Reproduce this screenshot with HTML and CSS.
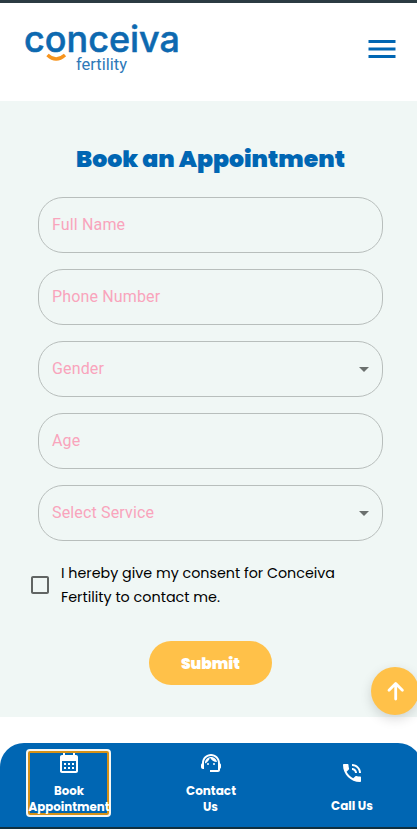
FILE: index.html
```html
<!DOCTYPE html>
<html lang="en">
<head>
<meta charset="utf-8">
<meta name="viewport" content="width=device-width, initial-scale=1">
<title>Book an Appointment</title>
<link rel="stylesheet" href="styles.css">
</head>
<body>
<header class="header">
  <svg class="logo" width="156" height="52" viewBox="0 0 156 52" role="img" aria-label="conceiva fertility">
    <text class="logo-name" x="-1" y="26" textLength="156" lengthAdjust="spacingAndGlyphs">conceiva</text>
    <path d="M22.5 29Q31 37 40 29" fill="none" stroke="#f7941d" stroke-width="3.4"/>
    <text class="logo-sub" x="51" y="43.5" textLength="51" lengthAdjust="spacingAndGlyphs">fertility</text>
  </svg>
  <svg class="menu" viewBox="0 0 24 24"><path d="M3 18h18v-2H3v2zm0-5h18v-2H3v2zm0-7v2h18V6H3z"/></svg>
</header>
<main class="main">
  <h1 class="title"><svg width="270" height="32"><text x="0" y="23" textLength="269" lengthAdjust="spacingAndGlyphs">Book an Appointment</text></svg></h1>
  <form class="form">
    <div class="field">Full Name</div>
    <div class="field">Phone Number</div>
    <div class="field">Gender<svg class="arrow" viewBox="0 0 24 24"><path d="M7 10l5 5 5-5z"/></svg></div>
    <div class="field">Age</div>
    <div class="field">Select Service<svg class="arrow" viewBox="0 0 24 24"><path d="M7 10l5 5 5-5z"/></svg></div>
  </form>
  <div class="consent">
    <svg class="checkbox" viewBox="0 0 24 24"><path d="M19 5v14H5V5h14m0-2H5c-1.1 0-2 .9-2 2v14c0 1.1.9 2 2 2h14c1.1 0 2-.9 2-2V5c0-1.1-.9-2-2-2z"/></svg>
    <svg class="consent-text" width="280" height="48">
      <text x="0" y="17" textLength="274" lengthAdjust="spacingAndGlyphs">I hereby give my consent for Conceiva</text>
      <text x="0" y="41" textLength="159" lengthAdjust="spacingAndGlyphs">Fertility to contact me.</text>
    </svg>
  </div>
  <div class="submit"><svg width="60" height="24"><text x="0" y="18" textLength="59" lengthAdjust="spacingAndGlyphs">Submit</text></svg></div>
</main>
<div class="to-top"><svg width="20" height="20" viewBox="0 0 20 20"><path d="M10.7 18V3M4 9.3l6.7-6.7 6.7 6.7"/></svg></div>
<nav class="nav">
  <div class="nav-item active">
    <svg class="nav-icon" viewBox="0 0 24 24"><path d="M19 4h-1V2h-2v2H8V2H6v2H5c-1.11 0-1.99.9-1.99 2L3 20c0 1.1.89 2 2 2h14c1.1 0 2-.9 2-2V6c0-1.1-.9-2-2-2zm0 16H5V10h14v10zM9 14H7v-2h2v2zm4 0h-2v-2h2v2zm4 0h-2v-2h2v2zm-8 4H7v-2h2v2zm4 0h-2v-2h2v2zm4 0h-2v-2h2v2z"/></svg>
    <svg class="nav-label" width="82" height="32"><text x="26" y="12" textLength="30" lengthAdjust="spacingAndGlyphs">Book</text><text x="0.5" y="28" textLength="81" lengthAdjust="spacingAndGlyphs">Appointment</text></svg>
  </div>
  <div class="nav-item">
    <svg class="nav-icon" viewBox="0 0 24 24"><path d="M21 12.22C21 6.73 16.74 3 12 3c-4.69 0-9 3.65-9 9.28-.6.34-1 .98-1 1.72v2c0 1.1.9 2 2 2h1v-6.1c0-3.87 3.13-7 7-7s7 3.13 7 7V19h-8v2h8c1.1 0 2-.9 2-2v-1.22c.59-.31 1-.92 1-1.64v-2.3c0-.7-.41-1.31-1-1.62z"/><circle cx="9" cy="13" r="1"/><circle cx="15" cy="13" r="1"/><path d="M18 11.03C17.52 8.18 15.04 6 12.05 6c-3.03 0-6.29 2.51-6.03 6.45 2.47-1.01 4.33-3.21 4.86-5.89 1.31 2.63 4 4.44 7.12 4.47z"/></svg>
    <svg class="nav-label" width="82" height="32"><text x="16" y="12" textLength="50" lengthAdjust="spacingAndGlyphs">Contact</text><text x="33" y="28" textLength="15" lengthAdjust="spacingAndGlyphs">Us</text></svg>
  </div>
  <div class="nav-item call">
    <svg class="nav-icon" viewBox="0 0 24 24"><path d="M20 15.5c-1.25 0-2.45-.2-3.57-.57-.1-.03-.21-.05-.31-.05-.26 0-.51.1-.71.29l-2.2 2.2c-2.83-1.44-5.15-3.75-6.59-6.59l2.2-2.21c.28-.26.36-.65.25-1C8.7 6.45 8.5 5.25 8.5 4c0-.55-.45-1-1-1H4c-.55 0-1 .45-1 1 0 9.39 7.61 17 17 17 .55 0 1-.45 1-1v-3.5c0-.55-.45-1-1-1zM19 12h2c0-4.97-4.03-9-9-9v2c3.87 0 7 3.13 7 7zm-4 0h2c0-2.76-2.24-5-5-5v2c1.66 0 3 1.34 3 3z"/></svg>
    <svg class="nav-label" width="82" height="18"><text x="20" y="17" textLength="42" lengthAdjust="spacingAndGlyphs">Call Us</text></svg>
  </div>
</nav>
</body>
</html>
```
FILE: styles.css
```css
* { box-sizing: border-box; }
body {
  margin: 0;
  height: 829px;
  overflow: hidden;
  display: flex;
  flex-direction: column;
  position: relative;
  background: #fff;
  border-top: 3px solid #2b3b42;
  border-bottom: 2px solid #10303f;
  font-family: Poppins, "Open Sans", sans-serif;
}
svg { display: block; flex: none; overflow: visible; }
.header {
  height: 98px;
  flex: none;
  display: flex;
  justify-content: space-between;
  align-items: flex-start;
  padding: 23px 17px 0 25px;
}
.logo-name { font: 500 36px Inter, sans-serif; fill: #0d69b0; stroke: #0d69b0; stroke-width: .5px; }
.logo-sub { font: 400 17px Roboto, sans-serif; fill: #2e79b8; }
.menu { width: 36px; height: 36px; margin-top: 5px; fill: #0066b3; }
.main {
  height: 616px;
  flex: none;
  background: #f0f7f5;
  padding: 43px 34px 0 38px;
}
.title { margin: 0 0 21px 38px; font-size: 22px; }
.title text { font: 900 22px Poppins, Lato, sans-serif; fill: #0066b3; }
.form { display: flex; flex-direction: column; gap: 16px; }
.field {
  height: 56px;
  display: flex;
  align-items: center;
  justify-content: space-between;
  padding: 0 6px 2px 13px;
  border: 1px solid #b8bebc;
  border-radius: 25px;
  color: #f9a4bc;
  font: 400 16px Roboto, sans-serif;
  letter-spacing: 0.15px;
}
.arrow { width: 24px; height: 24px; margin-top: 1px; fill: #6b706e; }
.consent { display: flex; gap: 9px; margin: 20px 0 0 -10px; align-items: center; width: 320px; }
.checkbox { width: 24px; height: 24px; fill: #616563; }
.consent-text text { font: 400 14px Poppins, "Open Sans", sans-serif; fill: #000; }
.submit {
  width: 123px;
  height: 44px;
  margin: 32px 0 0 111px;
  border-radius: 22px;
  background: #ffc149;
  display: flex;
  align-items: center;
  justify-content: center;
}
.submit text { font: 900 15px Poppins, Lato, sans-serif; fill: #fff; }
.form, .title { width: 345px; }
.to-top {
  position: absolute;
  left: 371px;
  top: 664px;
  width: 48px;
  height: 48px;
  border-radius: 50%;
  background: #ffc149;
  box-shadow: 0 4px 12px rgba(0, 0, 0, .15);
  display: flex;
  align-items: center;
  justify-content: center;
}
.to-top path { fill: none; stroke: #fff; stroke-width: 2.8; stroke-linecap: round; stroke-linejoin: round; }
.nav {
  height: 84px;
  margin: 26px -5px 0 0;
  flex: none;
  display: flex;
  gap: 58.5px;
  padding: 7px 0 0 27px;
  background: #0066b3;
  border-radius: 24px 24px 0 0;
}
.nav-item {
  width: 83px;
  height: 66px;
  flex: none;
  display: flex;
  flex-direction: column;
  align-items: center;
  padding-top: 1px;
}
.nav-item:nth-child(2) { padding-left: 1px; }
.active { border-radius: 3px; outline: 2px solid #f5f7f5; outline-offset: -1px; box-shadow: inset 0 0 0 3px #d59117; }
.nav-icon { width: 24px; height: 24px; fill: #fff; }
.nav-label { margin-top: 8px; }
.nav-label text { font: 700 12px Poppins, "Open Sans", sans-serif; fill: #fff; }
.call { padding-top: 11px; }
```
